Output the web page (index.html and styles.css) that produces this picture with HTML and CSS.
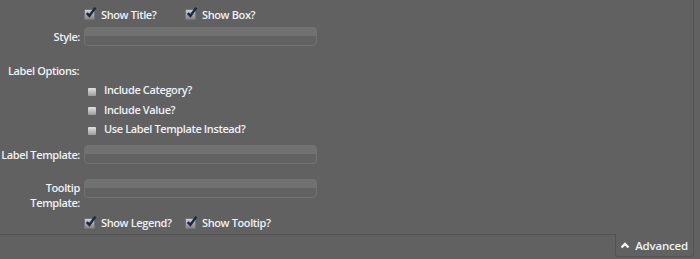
FILE: index.html
```html
<!DOCTYPE html>
<html>
<head>
<meta charset="utf-8">
<link rel="stylesheet" href="styles.css">
</head>
<body>
<div class="panel">
  <div class="form">
    <div class="label"></div>
    <div class="checks">
      <label class="chk"><span class="box"><svg viewBox="0 0 12 12"><path d="M2.5 6.5 L5 9 L10.5 1.5" /></svg></span>Show Title?</label>
      <label class="chk"><span class="box"><svg viewBox="0 0 12 12"><path d="M2.5 6.5 L5 9 L10.5 1.5" /></svg></span>Show Box?</label>
    </div>

    <div class="label r-style">Style:</div>
    <div class="r-style"><div class="input"></div></div>

    <div class="label section">Label Options:</div>

    <div class="label"></div>
    <div class="opts">
      <label class="opt"><span class="sq"></span>Include Category?</label>
      <label class="opt"><span class="sq"></span>Include Value?</label>
      <label class="opt"><span class="sq"></span>Use Label Template Instead?</label>
    </div>

    <div class="label r-lt">Label Template:</div>
    <div class="r-lt"><div class="input"></div></div>

    <div class="label r-tt">Tooltip<br>Template:</div>
    <div class="r-tt"><div class="input"></div></div>

    <div class="label"></div>
    <div class="checks bottom">
      <label class="chk"><span class="box"><svg viewBox="0 0 12 12"><path d="M2.5 6.5 L5 9 L10.5 1.5" /></svg></span>Show Legend?</label>
      <label class="chk"><span class="box"><svg viewBox="0 0 12 12"><path d="M2.5 6.5 L5 9 L10.5 1.5" /></svg></span>Show Tooltip?</label>
    </div>
  </div>
</div>
<div class="footer">
  <button class="adv"><svg viewBox="0 0 10 8"><path d="M1.5 6.5 L5 3 L8.5 6.5" /></svg>Advanced</button>
</div>
</body>
</html>
```
FILE: styles.css
```css
html, body {
  margin: 0;
  padding: 0;
  background: #616161;
}
body {
  font-family: "Open Sans", "DejaVu Sans", sans-serif;
  font-size: 11px;
  font-weight: 600;
  letter-spacing: -0.38px;
  color: #eef1f5;
  width: 700px;
  height: 259px;
  overflow: hidden;
}
.panel {
  width: 694px;
  height: 235px;
  border-right: 1px solid #535353;
  border-bottom: 1px solid #535353;
  box-sizing: border-box;
}
.form {
  display: grid;
  grid-template-columns: 80px 233px;
  column-gap: 4px;
  padding-top: 4px;
}
.label {
  text-align: right;
  line-height: 15px;
  white-space: nowrap;
}
.checks {
  display: flex;
  height: 20px;
  align-items: center;
}
.chk {
  display: flex;
  align-items: center;
  width: 101px;
  gap: 6px;
  white-space: nowrap;
}
.box {
  width: 11px;
  height: 11px;
  box-sizing: border-box;
  border-radius: 1px;
  background: linear-gradient(#d0d0d0, #858585);
  border: 1px solid #767676;
  position: relative;
  margin-top: 1px;
}
.box svg {
  position: absolute;
  left: -1px;
  top: -4px;
  width: 13px;
  height: 13px;
  fill: none;
  stroke: #1d2747;
  stroke-width: 2.3;
}
.r-style { margin-top: 3px; }
.r-style.label { padding-top: 2px; }
.input {
  height: 19px;
  box-sizing: border-box;
  border: 1px solid #727272;
  border-radius: 4px;
  background: linear-gradient(#717171 0, #717171 45%, #626262 50%, #626262 100%);
}
.section.label {
  margin-top: 17px;
  text-align: left;
  padding-left: 8px;
  grid-column: 1 / span 2;
}
.opts {
  display: flex;
  flex-direction: column;
  padding-top: 2px;
}
.opt {
  height: 19.5px;
  display: flex;
  align-items: center;
  gap: 8px;
  padding-left: 4px;
  white-space: nowrap;
}
.sq {
  width: 8px;
  height: 8px;
  border-radius: 1px;
  background: linear-gradient(#e2e2e2, #9b9b9b);
  margin-top: 4px;
}
.r-lt { margin-top: 6px; }
.r-lt.label { padding-top: 2px; margin-left: -2px; }
.r-tt { margin-top: 15px; }
.r-tt.label { padding-top: 1px; }
.checks.bottom { margin-top: 3px; }
.footer {
  display: flex;
  justify-content: flex-end;
  width: 694px;
}
.adv {
  display: flex;
  align-items: center;
  gap: 5px;
  height: 23px;
  margin-top: -1px;
  padding: 0 5px 0 4px;
  background: #616161;
  border: 1px solid #535353;
  border-top: none;
  border-radius: 0 0 3px 3px;
  color: #eef1f5;
  font: inherit;
  font-size: 11.5px;
  font-weight: 600;
  letter-spacing: -0.2px;
}
.adv svg {
  width: 10px;
  height: 8px;
  fill: none;
  stroke: #f4f4f4;
  stroke-width: 2.4;
}
```
